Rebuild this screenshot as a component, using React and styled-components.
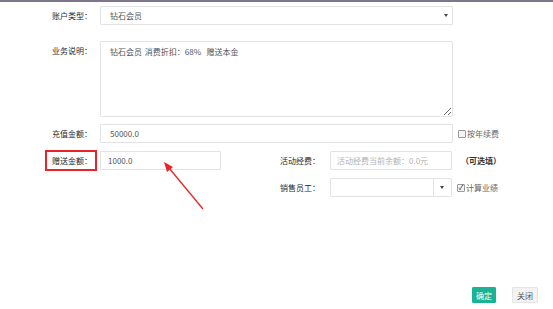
import styled, { createGlobalStyle } from 'styled-components';

const GlobalStyle = createGlobalStyle`
  html, body {
    margin: 0;
    padding: 0;
    background: #fff;
  }
  body {
    font-family: "Noto Sans CJK SC", "Liberation Sans", sans-serif;
    font-size: 8px;
    color: #555;
  }
`;

const Page = styled.div`
  position: relative;
  width: 553px;
  height: 309px;
  border-top: 2px solid #7d7789;
  box-sizing: border-box;
  overflow: hidden;
`;

const Form = styled.div`
  display: flex;
  flex-direction: column;
  padding-top: 4px;
`;

const Row = styled.div`
  display: flex;
  align-items: ${(p) => (p.$top ? 'flex-start' : 'center')};
  margin-top: ${(p) => p.$gap || 0}px;
`;

const Label = styled.div`
  position: relative;
  width: ${(p) => p.$width || 92}px;
  flex: none;
  text-align: right;
  color: #2a2a2a;
  font-size: 8px;
  line-height: 19px;
  white-space: nowrap;

  ${(p) =>
    p.$marked &&
    `
    &::before {
      content: '';
      position: absolute;
      left: 45px;
      right: -5px;
      top: -1px;
      bottom: -1px;
      border: 2px solid #e8252b;
    }
  `}
`;

const Field = styled.div`
  position: relative;
  box-sizing: border-box;
  width: ${(p) => p.$width}px;
  height: 19px;
  margin-left: ${(p) => p.$left || 8}px;
  border: 1px solid #e3e3e6;
  border-radius: 1px;
  display: flex;
  align-items: center;
  padding-left: ${(p) => p.$pad || 9}px;
  color: ${(p) => (p.$placeholder ? '#b3b3b3' : '#555')};
  font-size: 8px;
  white-space: nowrap;
  background: #fff;
`;

const Caret = styled.span`
  position: absolute;
  right: ${(p) => p.$right || 4}px;
  top: 50%;
  width: 0;
  height: 0;
  margin-top: -2px;
  border-left: 2.5px solid transparent;
  border-right: 2.5px solid transparent;
  border-top: 3px solid #444;
`;

const Divider = styled.span`
  position: absolute;
  right: 17px;
  top: 0;
  bottom: 0;
  width: 1px;
  background: #e3e3e6;
`;

const Area = styled.textarea`
  box-sizing: border-box;
  width: 353px;
  height: 76px;
  margin-left: 8px;
  border: 1px solid #e3e3e6;
  border-radius: 1px;
  padding: 4px 9px;
  font-family: inherit;
  font-size: 8px;
  line-height: 12px;
  color: #555;
  resize: vertical;
  outline: none;
  word-spacing: 1px;
`;

const Extra = styled.label`
  display: flex;
  align-items: center;
  gap: 1px;
  margin-left: ${(p) => p.$left || 5}px;
  color: ${(p) => (p.$bold ? '#333' : '#666')};
  font-size: 8px;
  font-weight: ${(p) => (p.$bold ? 700 : 400)};
  white-space: nowrap;
`;

const Box = styled.span`
  box-sizing: border-box;
  width: 8px;
  height: 8px;
  border: 1px solid #999;
  border-radius: 1px;
  background: #f4f4f4;
  display: inline-flex;
  align-items: center;
  justify-content: center;
  font-size: 7px;
  line-height: 1;
  color: #222;
`;

const Footer = styled.div`
  display: flex;
  justify-content: flex-end;
  gap: 16px;
  padding-right: 15px;
  margin-top: 90px;
`;

const Button = styled.button`
  width: ${(p) => p.$w}px;
  height: 16px;
  padding: 0;
  border: 1px solid ${(p) => (p.$primary ? '#1ab394' : '#e4e4e4')};
  background: ${(p) => (p.$primary ? '#1ab394' : '#f3f3f3')};
  color: ${(p) => (p.$primary ? '#fff' : '#555')};
  font-family: inherit;
  font-size: 8px;
  border-radius: 1px;
`;

const Arrow = styled.svg`
  position: absolute;
  left: 0;
  top: 0;
  pointer-events: none;
`;

export default function App() {
  return (
    <Page>
      <GlobalStyle />
      <Form>
        <Row>
          <Label>账户类型：</Label>
          <Field $width={353}>
            钻石会员
            <Caret $right={4} />
          </Field>
        </Row>
        <Row $top $gap={16}>
          <Label>业务说明：</Label>
          <Area readOnly value="钻石会员 消费折扣：68%  赠送本金" />
        </Row>
        <Row $gap={7}>
          <Label>充值金额：</Label>
          <Field $width={353}>50000.0</Field>
          <Extra>
            <Box />
            按年续费
          </Extra>
        </Row>
        <Row $gap={8}>
          <Label $marked>赠送金额：</Label>
          <Field $width={121} $pad={7}>1000.0</Field>
          <Label $width={99}>活动经费：</Label>
          <Field $width={122} $left={10} $pad={6} $placeholder>
            活动经费当前余额：0.0元
          </Field>
          <Extra $left={9} $bold>
            （可选填）
          </Extra>
        </Row>
        <Row $gap={8}>
          <Label $width={320}>销售员工：</Label>
          <Field $width={122} $left={10}>
            <Divider />
            <Caret $right={7} />
          </Field>
          <Extra>
            <Box>✓</Box>
            计算业绩
          </Extra>
        </Row>
      </Form>
      <Footer>
        <Button $primary $w={24}>确定</Button>
        <Button $w={26}>关闭</Button>
      </Footer>
      <Arrow width="553" height="309">
        <line x1="203" y1="207" x2="169" y2="166" stroke="#e8252b" strokeWidth="1.3" />
        <polygon points="164,160 173,165 167,170" fill="#e8252b" />
      </Arrow>
    </Page>
  );
}
